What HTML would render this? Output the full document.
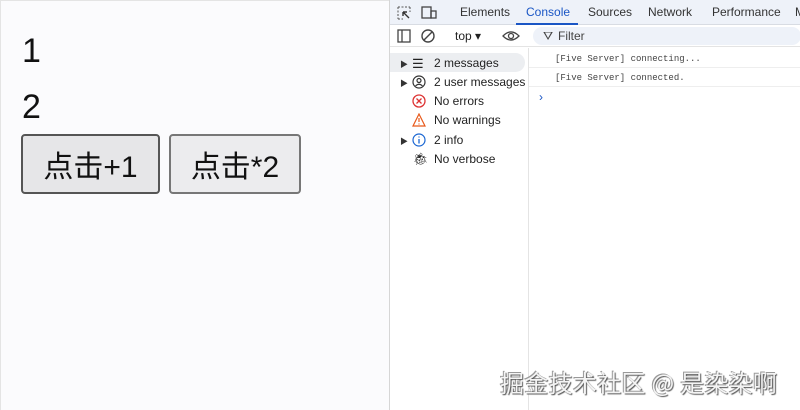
<!DOCTYPE html>
<html><head><meta charset="utf-8"><style>
*{margin:0;padding:0;box-sizing:border-box}
body{width:800px;height:410px;overflow:hidden;background:#fbfbfd;font-family:"Liberation Sans","Noto Sans CJK SC",sans-serif;position:relative}
.left{position:absolute;left:0;top:0;width:389px;height:410px;background:#fbfbfd;border-top:1px solid #e4e4e4;border-left:1px solid #e4e4e4}
.num{position:absolute;left:21px;font-size:34px;color:#111}
.btn{position:absolute;top:133px;height:60px;border:2px solid #666;border-radius:4px;background:#ececee;font-size:30px;color:#111;display:flex;align-items:center;justify-content:center;font-family:"Liberation Sans","Noto Sans CJK SC",sans-serif}
.dev{position:absolute;left:389px;top:0;width:411px;height:410px;background:#fff;border-left:1px solid #d6d6d6;font-size:12px;color:#222}
.tabs{height:25px;background:#eef2f9;border-bottom:1px solid #d8dce3;position:relative}
.tabs span{position:absolute;top:5px;font-size:12px;color:#333}
.tb2{position:absolute;top:25px;left:0;right:0;height:22px;background:#fff;border-bottom:1px solid #e4e4e4}
.side{position:absolute;top:48px;left:0;width:139px;bottom:0;border-right:1px solid #e4e4e4}
.it{position:absolute;left:44px;font-size:12px;color:#222}
.ic{position:absolute;left:22px;width:14px;height:14px}
.arr{position:absolute;left:10px;font-size:8px;color:#333}
.log{position:absolute;left:165px;font-family:"Liberation Mono",monospace;font-size:9px;color:#444}
.wm{position:absolute;left:500px;top:364px;font-size:24px;color:#f4f4f4;font-family:"Noto Sans CJK SC",sans-serif;text-shadow:1px 1px 1px #555,-1px -1px 0 #999;letter-spacing:0.3px;white-space:nowrap}
</style></head><body>
<div class="left">
<div class="num" style="top:31px">1</div>
<div class="num" style="top:87px">2</div>
<div class="btn" style="left:20px;width:139px;background:#e6e6e8;border-color:#555">点击+1</div>
<div class="btn" style="left:168px;width:132px;border-color:#777">点击*2</div>
</div>
<div class="dev">
<div class="tabs">
<svg style="position:absolute;left:7px;top:6px" width="14" height="14"><path d="M1 1h12M1 1v12M1 13h5M13 1v5" stroke="#555" stroke-dasharray="2 1.5" fill="none"/><path d="M6 6l6 6M6 6h4M6 6v4" stroke="#333" stroke-width="1.4" fill="none"/></svg>
<svg style="position:absolute;left:31px;top:6px" width="16" height="14"><rect x="1" y="1" width="9" height="11" fill="none" stroke="#444" stroke-width="1.3"/><rect x="10" y="5" width="5" height="7" fill="none" stroke="#444" stroke-width="1.3"/></svg>
<span style="left:70px">Elements</span>
<span style="left:136px;color:#1a56c5">Console</span>
<div style="position:absolute;left:126px;top:23px;width:62px;height:2px;background:#1a56c5"></div>
<span style="left:198px">Sources</span>
<span style="left:258px">Network</span>
<span style="left:322px">Performance</span>
<span style="left:405px">M</span>
</div>
<div class="tb2">
<svg style="position:absolute;left:7px;top:4px" width="14" height="14"><rect x="1" y="1" width="12" height="12" fill="none" stroke="#444" stroke-width="1.3"/><path d="M5 1v12" stroke="#444" stroke-width="1.3"/></svg>
<svg style="position:absolute;left:31px;top:4px" width="14" height="14"><circle cx="7" cy="7" r="6" fill="none" stroke="#444" stroke-width="1.4"/><path d="M3 11L11 3" stroke="#444" stroke-width="1.4"/></svg>
<span style="position:absolute;left:65px;top:4px">top ▾</span>
<svg style="position:absolute;left:112px;top:4px" width="18" height="14"><path d="M1 7Q9 -1 17 7Q9 15 1 7Z" fill="none" stroke="#444" stroke-width="1.3"/><circle cx="9" cy="7" r="2.5" fill="none" stroke="#444" stroke-width="1.3"/></svg>
<div style="position:absolute;left:143px;top:2px;width:268px;height:18px;background:#eef2f9;border-radius:9px"></div>
<span style="position:absolute;left:153px;top:4px;color:#444">⛛</span>
<span style="position:absolute;left:168px;top:4px;color:#444">Filter</span>
</div>
<div class="side">
<div style="position:absolute;left:0;top:5px;width:135px;height:19px;background:#eceef1;border-radius:0 10px 10px 0"></div>
<span class="arr" style="top:11px">▶</span><span class="it" style="top:8px;left:22px;font-size:13px">☰</span><span class="it" style="top:8px">2 messages</span>
<span class="arr" style="top:30px">▶</span><svg class="ic" style="top:27px" viewBox="0 0 14 14"><circle cx="7" cy="7" r="6" fill="none" stroke="#333" stroke-width="1.2"/><circle cx="7" cy="5.5" r="2" fill="none" stroke="#333" stroke-width="1.2"/><path d="M3.5 11Q7 7.5 10.5 11" fill="none" stroke="#333" stroke-width="1.2"/></svg><span class="it" style="top:27px">2 user messages</span>
<svg class="ic" style="top:46px" viewBox="0 0 14 14"><circle cx="7" cy="7" r="6" fill="none" stroke="#d33" stroke-width="1.3"/><path d="M4.5 4.5l5 5M9.5 4.5l-5 5" stroke="#d33" stroke-width="1.3"/></svg><span class="it" style="top:46px">No errors</span>
<svg class="ic" style="top:65px" viewBox="0 0 14 14"><path d="M7 1L13 13H1Z" fill="none" stroke="#e8591a" stroke-width="1.2"/><path d="M7 5v4M7 10.5v1" stroke="#e8591a" stroke-width="1.2"/></svg><span class="it" style="top:65px">No warnings</span>
<span class="arr" style="top:88px">▶</span><svg class="ic" style="top:85px" viewBox="0 0 14 14"><circle cx="7" cy="7" r="6" fill="none" stroke="#1a66d2" stroke-width="1.2"/><path d="M7 6v4.5M7 3.5v1" stroke="#1a66d2" stroke-width="1.3"/></svg><span class="it" style="top:85px">2 info</span>
<span class="it" style="top:104px;left:23px;font-size:12px">🐞︎</span><span class="it" style="top:104px">No verbose</span>
</div>
<div style="position:absolute;left:139px;right:0;top:67px;border-top:1px solid #eee"></div>
<div style="position:absolute;left:139px;right:0;top:86px;border-top:1px solid #eee"></div>
<div class="log" style="top:54px">[Five Server] connecting...</div>
<div class="log" style="top:73px">[Five Server] connected.</div>
<div style="position:absolute;left:149px;top:90px;color:#1a56c5;font-size:12px">›</div>
</div>
<div class="wm">掘金技术社区 @ 是染染啊</div>
</body></html>
